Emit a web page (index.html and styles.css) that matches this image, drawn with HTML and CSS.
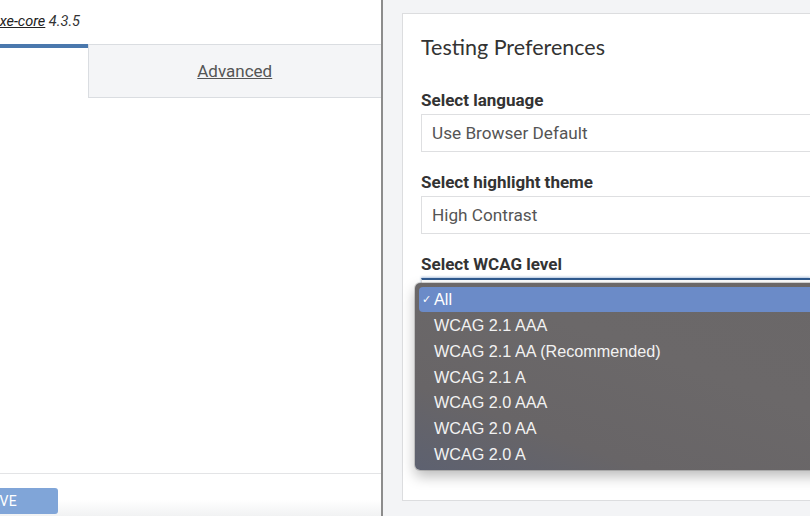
FILE: index.html
```html
<!DOCTYPE html>
<html>
<head>
<meta charset="utf-8">
<link rel="stylesheet" href="styles.css">
</head>
<body>
<div class="left">
  <div class="left-inner">
    <div class="version"><a class="lib" href="#">axe-core</a> 4.3.5</div>
    <div class="tabs">
      <div class="tab active"></div>
      <div class="tab"><a href="#" class="tab-link">Advanced</a></div>
    </div>
    <div class="spacer"></div>
    <div class="footer">
      <button class="save">SAVE</button>
    </div>
  </div>
</div>
<div class="right">
  <div class="card">
    <h2 class="title">Testing Preferences</h2>
    <div class="field">
      <div class="label">Select language</div>
      <div class="select">Use Browser Default</div>
    </div>
    <div class="field">
      <div class="label">Select highlight theme</div>
      <div class="select">High Contrast</div>
    </div>
    <div class="field wcag">
      <div class="label">Select WCAG level</div>
      <div class="select focused"></div>
      <div class="menu">
        <div class="item selected"><span class="check">✓</span><span>All</span></div>
        <div class="item">WCAG 2.1 AAA</div>
        <div class="item">WCAG 2.1 AA (Recommended)</div>
        <div class="item">WCAG 2.1 A</div>
        <div class="item">WCAG 2.0 AAA</div>
        <div class="item">WCAG 2.0 AA</div>
        <div class="item">WCAG 2.0 A</div>
      </div>
    </div>
  </div>
</div>
</body>
</html>
```
FILE: styles.css
```css
html, body {
  margin: 0;
  padding: 0;
  width: 810px;
  height: 516px;
  overflow: hidden;
}
body {
  display: flex;
  font-family: Roboto, "Liberation Sans", sans-serif;
  color: #333;
}
.left {
  width: 381px;
  flex: none;
  height: 516px;
  border-right: 2px solid #8c8c8c;
  overflow: hidden;
  background: linear-gradient(#fff 0, #fff 500px, #f1f2f3 516px);
}
.left-inner {
  margin-left: -205px;
  width: 586px;
  height: 516px;
  display: flex;
  flex-direction: column;
}
.version {
  height: 44px;
  line-height: 44px;
  padding-left: 197px;
  font-style: italic;
  font-size: 14.5px;
  color: #333;
  box-sizing: border-box;
}
.lib {
  color: #222;
  text-decoration: underline;
}
.tabs {
  display: flex;
  height: 54px;
}
.tab {
  flex: 1;
  box-sizing: border-box;
  background: #f4f5f7;
  border: 1px solid #dadde1;
  border-right: none;
  display: flex;
  align-items: center;
  justify-content: center;
}
.tab.active {
  background: #fff;
  border: none;
  border-top: 4px solid #4a78ad;
}
.tab-link {
  color: #555;
  font-size: 17px;
  text-decoration: underline;
}
.spacer {
  flex: 1;
}
.footer {
  border-top: 1px solid #e3e4e6;
  height: 43px;
  padding-top: 14px;
  box-sizing: border-box;
  padding-left: 146px;
}
.save {
  height: 26px;
  width: 117px;
  border: none;
  border-radius: 3px;
  background: #80a5d8;
  color: #fff;
  font-family: Roboto, "Liberation Sans", sans-serif;
  font-size: 14px;
  padding: 0;
  letter-spacing: 0.3px;
}
.right {
  flex: 1;
  background: #f3f4f6;
  padding: 13px 0 15px 19px;
  box-sizing: border-box;
  height: 516px;
  overflow: hidden;
}
.card {
  background: #fff;
  border: 1px solid #dcdddf;
  border-right: none;
  height: 100%;
  box-sizing: border-box;
  padding: 20px 0 0 18px;
}
.title {
  font-family: Lato, "Open Sans", sans-serif;
  font-weight: 400;
  font-size: 21.5px;
  line-height: 26px;
  margin: 0 0 30px 0;
  color: #333;
}
.field {
  margin-bottom: 20px;
  position: relative;
}
.label {
  font-weight: 700;
  font-size: 17px;
  line-height: 20px;
  margin-bottom: 4px;
  color: #333;
}
.select {
  height: 38px;
  box-sizing: border-box;
  border: 1px solid #dedfe1;
  border-right: none;
  padding-left: 10px;
  line-height: 36px;
  font-size: 17.2px;
  color: #555;
}
.select.focused {
  border-top: 2px solid #2f5a8f;
  box-shadow: 0 -1px 2px rgba(60, 110, 180, 0.4);
}
.menu {
  position: absolute;
  top: 29px;
  left: -6px;
  width: 420px;
  height: 187px;
  box-sizing: border-box;
  padding: 4px 0 0 4px;
  border-radius: 5px;
  background: linear-gradient(20deg, #5d6170 0%, #686567 25%, #6b6869 60%, #6a6768 100%);
  box-shadow: 0 6px 14px rgba(0, 0, 0, 0.28), 0 0 0 1px rgba(0, 0, 0, 0.15);
  font-family: "Liberation Sans", Arial, sans-serif;
  font-size: 16.2px;
  color: #f2f2f2;
}
.item {
  height: 25.8px;
  line-height: 25.8px;
  padding-left: 15px;
}
.item.selected {
  display: flex;
  padding-left: 3px;
  background: #6b8bc8;
  border-radius: 4px 0 0 4px;
  height: 25px;
  line-height: 24px;
  margin-bottom: 1px;
  color: #fff;
}
.check {
  width: 12px;
  flex: none;
  font-size: 11px;
}
```
